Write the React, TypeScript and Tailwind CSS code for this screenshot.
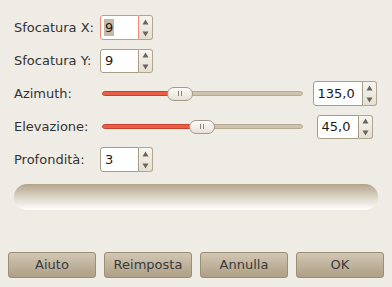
import React from "react";

function Arrows() {
  return (
    <div className="flex h-full w-[14px] flex-col items-center justify-center gap-[6px] rounded-r-[3px] border border-l-0 border-[#b0a58f] bg-gradient-to-b from-[#f7f5f0] to-[#e4dfd5]">
      <svg width="7" height="6" viewBox="0 0 7 6"><path d="M3.5 0.5 L6.5 5.5 L0.5 5.5 Z" fill="#6b6558" /></svg>
      <svg width="7" height="6" viewBox="0 0 7 6"><path d="M0.5 0.5 L6.5 0.5 L3.5 5.5 Z" fill="#6b6558" /></svg>
    </div>
  );
}

function Spin({ value, w, focus = false, sel = false, h = "h-[25px]" }: { value: string; w: string; focus?: boolean; sel?: boolean; h?: string }) {
  return (
    <div className={`flex ${h}`}>
      <div className={`flex ${w} items-center rounded-l-[3px] border bg-white pl-[3px] ${focus ? "border-[#ef8a73]" : "border-[#a89c84]"}`}>
        <span className={`leading-[17px] text-[#1a1a1a] ${sel ? "bg-[#c6baa6] px-[1px]" : "pl-[1px]"}`}>{value}</span>
      </div>
      <Arrows />
    </div>
  );
}

function Slider({ pos }: { pos: number }) {
  return (
    <div className="relative flex h-[14px] w-[201px] items-center">
      <div className="flex h-[5px] w-full overflow-hidden rounded-full">
        <div className="h-full rounded-l-full border border-[#c7412d] bg-[#ec5d45]" style={{ width: pos + 4 }} />
        <div className="h-full flex-1 rounded-r-full border border-[#b5a991] bg-[#cdc2ac]" />
      </div>
      <div
        className="absolute top-[0px] flex h-[14px] w-[26px] items-center justify-center gap-[2px] rounded-full border border-[#a69a84] bg-gradient-to-b from-[#fdfcfa] to-[#e6e1d8]"
        style={{ left: pos }}
      >
        <div className="h-[5px] w-[1px] bg-[#8d8474]" />
        <div className="h-[5px] w-[1px] bg-[#8d8474]" />
      </div>
    </div>
  );
}

function Btn({ label }: { label: string }) {
  return (
    <div className="flex h-[26px] w-[88px] items-center justify-center rounded-[3px] border border-[#9a8d76] bg-gradient-to-b from-[#d2c7b4] to-[#ae9f85] text-[#3a3a3a]">
      {label}
    </div>
  );
}

export default function App() {
  return (
    <div
      className="flex h-[287px] w-[392px] flex-col bg-[#efebe5] pl-[14px] text-[13px] text-[#333333]"
      style={{ fontFamily: '"DejaVu Sans", sans-serif' }}
    >
      <div className="mt-[15px] flex h-[25px] items-center">
        <span className="w-[86px]">Sfocatura X:</span>
        <Spin value="9" w="w-[39px]" focus sel />
      </div>
      <div className="mt-[8px] flex h-[25px] items-center">
        <span className="w-[86px]">Sfocatura Y:</span>
        <Spin value="9" w="w-[39px]" h="h-[24px]" />
      </div>
      <div className="mt-[8px] flex h-[25px] items-center">
        <span className="w-[88px]">Azimuth:</span>
        <Slider pos={65} />
        <div className="ml-[3px] flex w-[77px] justify-center">
          <Spin value="135,0" w="w-[50px]" />
        </div>
      </div>
      <div className="mt-[8px] flex h-[25px] items-center">
        <span className="w-[88px]">Elevazione:</span>
        <Slider pos={87} />
        <div className="ml-[3px] flex w-[77px] justify-center">
          <Spin value="45,0" w="w-[42px]" h="h-[24px]" />
        </div>
      </div>
      <div className="mt-[8px] flex h-[25px] items-center">
        <span className="w-[86px]">Profondità:</span>
        <Spin value="3" w="w-[39px]" />
      </div>
      <div className="mt-[12px] h-[26px] w-[364px] rounded-full bg-gradient-to-b from-[#b3a48b] via-[#dcd4c6] to-[#ffffff]" />
      <div className="mt-auto mb-[9px] -ml-[6px] flex gap-[8px]">
        <Btn label="Aiuto" />
        <Btn label="Reimposta" />
        <Btn label="Annulla" />
        <Btn label="OK" />
      </div>
    </div>
  );
}
